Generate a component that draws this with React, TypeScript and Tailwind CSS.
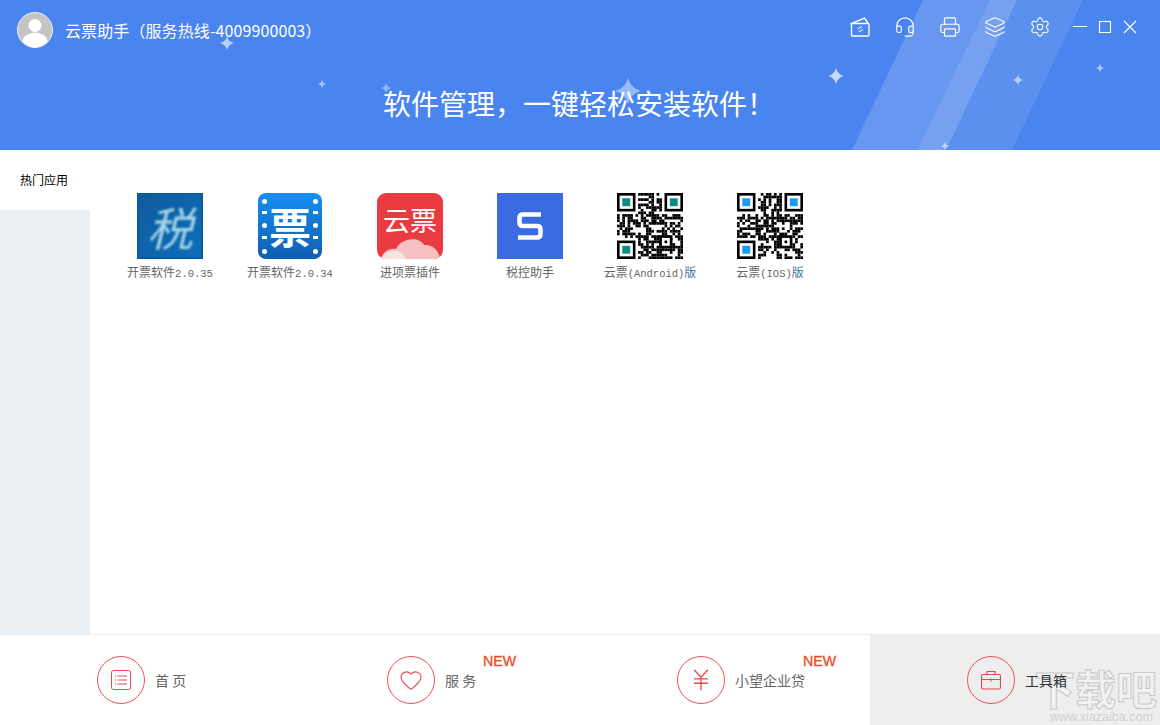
import { Headset, Printer, Layers, Settings, Heart, JapaneseYen } from "lucide-react";

const cjk = "font-['Noto_Sans_CJK_SC','Liberation_Sans',sans-serif]";

const stars: [number, number, number, number][] = [
  [227, 43, 7, 0.75],
  [322, 84, 4, 0.6],
  [386, 88, 5, 0.5],
  [628, 91, 13, 0.55],
  [836, 76, 8, 0.85],
  [1018, 80, 5, 0.7],
  [1100, 68, 4, 0.65],
  [945, 146, 4, 0.7],
];

function HeaderDecor() {
  return (
    <svg className="absolute inset-0" width="1160" height="150" viewBox="0 0 1160 150">
      <polygon points="923,0 1017,0 946,150 852,150" fill="#fff" fillOpacity="0.16" />
      <polygon points="990,0 1083,0 1012,150 917,150" fill="#fff" fillOpacity="0.1" />
      {stars.map(([x, y, r, o]) => (
        <path
          key={`${x}-${y}`}
          d={`M${x} ${y - r}Q${x + r * 0.2} ${y - r * 0.2} ${x + r} ${y}Q${x + r * 0.2} ${y + r * 0.2} ${x} ${y + r}Q${x - r * 0.2} ${y + r * 0.2} ${x - r} ${y}Q${x - r * 0.2} ${y - r * 0.2} ${x} ${y - r}Z`}
          fill="#dbe9ff"
          fillOpacity={o}
        />
      ))}
    </svg>
  );
}

function Avatar() {
  return (
    <svg width="36" height="36" viewBox="0 0 36 36">
      <defs>
        <clipPath id="av">
          <circle cx="18" cy="18" r="17.5" />
        </clipPath>
      </defs>
      <circle cx="18" cy="18" r="17.5" fill="#c4c4c4" />
      <g clipPath="url(#av)">
        <circle cx="18" cy="13.5" r="6.5" fill="#fff" />
        <ellipse cx="18" cy="30" rx="12.5" ry="9.5" fill="#fff" />
      </g>
      <circle cx="18" cy="18" r="17.5" fill="none" stroke="#e8eefb" strokeWidth="1" />
    </svg>
  );
}

function TicketIcon() {
  return (
    <svg width="22" height="22" viewBox="0 0 22 22" fill="none" stroke="#fff" strokeWidth="1.4">
      <path d="M1.5 8 15.5 2l3.5 5" />
      <rect x="2.5" y="7.5" width="17.5" height="12.5" rx="1" />
      <path d="M8.5 13 13 10.5M9.5 16 14 13.5" strokeWidth="1" />
    </svg>
  );
}

function WindowControls() {
  return (
    <svg width="64" height="14" viewBox="0 0 64 14" fill="none" stroke="#fff" strokeWidth="1.1">
      <path d="M0 6.5H14" />
      <rect x="26.5" y="1.5" width="11" height="11" />
      <path d="M51 1 63 13M63 1 51 13" />
    </svg>
  );
}

function ShuiIcon() {
  return (
    <div className="w-[66px] h-[66px] bg-gradient-to-br from-[#0f5c9f] to-[#0d6dba] border-2 border-[#0b5a9c] flex items-center justify-center overflow-hidden">
      <span className={`${cjk} text-[46px] leading-none text-[#a5d6e8] italic blur-[0.8px]`}>税</span>
    </div>
  );
}

function PiaoIcon() {
  const marks = [
    { y: 8, round: true },
    { y: 20, round: false },
    { y: 32, round: true },
    { y: 45, round: false },
    { y: 58, round: true },
  ];
  return (
    <div className="relative w-[64px] h-[66px] rounded-[8px] bg-gradient-to-b from-[#1590f2] to-[#0f5fb0] flex items-center justify-center">
      <span className={`${cjk} text-[42px] leading-none font-bold text-white`}>票</span>
      {marks.map((m) => (
        <span
          key={`l${m.y}`}
          className={`absolute left-[4px] bg-white ${m.round ? "w-[5px] h-[5px] rounded-full" : "w-[5px] h-[3px]"}`}
          style={{ top: m.y - 2 }}
        />
      ))}
      {marks.map((m) => (
        <span
          key={`r${m.y}`}
          className={`absolute right-[4px] bg-white ${m.round ? "w-[5px] h-[5px] rounded-full" : "w-[5px] h-[3px]"}`}
          style={{ top: m.y - 2 }}
        />
      ))}
    </div>
  );
}

function YunIcon() {
  return (
    <div className="relative w-[66px] h-[66px] rounded-[9px] bg-[#ea3b40] overflow-hidden flex justify-center">
      <span className={`${cjk} mt-[10px] text-[27px] leading-[34px] text-white`}>云票</span>
      <svg className="absolute left-0 bottom-0" width="66" height="24" viewBox="0 0 66 24">
        <path d="M4 24C6 16 13 13 19 14 24 3 42 1 47 10 55 9 62 15 63 24Z" fill="#f4c0c2" />
        <path d="M4 24C8 16 18 13 25 18 27 20 28 22 28 24Z" fill="#fbe3e3" />
      </svg>
    </div>
  );
}

function SIcon() {
  return (
    <div className="w-[66px] h-[66px] bg-[#3a6be2] flex items-center justify-center">
      <svg width="26" height="28" viewBox="0 0 26 28" fill="none" stroke="#fff" strokeWidth="4.5">
        <path d="M24 2.5H6Q2.5 2.5 2.5 6V10.5Q2.5 14 6 14H20Q23.5 14 23.5 17.5V22Q23.5 25.5 20 25.5H1" />
      </svg>
    </div>
  );
}

function QrCode({ seed, eye }: { seed: number; eye: string }) {
  const size = 25;
  const cells: [number, number][] = [];
  let s = seed;
  const inFinder = (x: number, y: number) =>
    (x < 8 && y < 8) || (x > 16 && y < 8) || (x < 8 && y > 16);
  for (let y = 0; y < size; y++) {
    for (let x = 0; x < size; x++) {
      s = (s * 1103515245 + 12345) & 0x7fffffff;
      if (!inFinder(x, y) && (s >> 16) % 100 < 60) cells.push([x, y]);
    }
  }
  const finder = (x: number, y: number) => (
    <g key={`${x}-${y}`}>
      <rect x={x + 0.5} y={y + 0.5} width="6" height="6" fill="#fff" stroke="#000" />
      <rect x={x + 2} y={y + 2} width="3" height="3" fill={eye} />
    </g>
  );
  return (
    <svg width="66" height="66" viewBox="0 0 25 25">
      {cells.map(([x, y]) => (
        <rect key={`${x}-${y}`} x={x} y={y} width="1.02" height="1.02" fill="#000" />
      ))}
      {finder(0, 0)}
      {finder(18, 0)}
      {finder(0, 18)}
      <rect x="16.5" y="16.5" width="4" height="4" fill="#fff" stroke="#000" />
      <rect x="18" y="18" width="1" height="1" fill="#000" />
    </svg>
  );
}

// latin part of the labels runs a bit smaller than the chinese
function Lat({ children }: { children: React.ReactNode }) {
  return <span className="text-[10.5px] font-['Liberation_Mono',monospace]">{children}</span>;
}

const apps = [
  { icon: <ShuiIcon />, label: <>开票软件<Lat>2.0.35</Lat></> },
  { icon: <PiaoIcon />, label: <>开票软件<Lat>2.0.34</Lat></> },
  { icon: <YunIcon />, label: <>进项票插件</> },
  { icon: <SIcon />, label: <>税控助手</> },
  {
    icon: <QrCode seed={71} eye="#0f8c80" />,
    label: <>云票<Lat>(Android)</Lat><span className="text-[#3f76a8]">版</span></>,
  },
  {
    icon: <QrCode seed={1937} eye="#1b9cec" />,
    label: <>云票<Lat>(IOS)</Lat><span className="text-[#3f76a8]">版</span></>,
  },
];

function NavCircle({ children }: { children: React.ReactNode }) {
  return (
    <div className="w-[48px] h-[48px] shrink-0 rounded-full border border-[#e8545a] flex items-center justify-center text-[#e4474d]">
      {children}
    </div>
  );
}

function ListIcon() {
  return (
    <svg width="20" height="20" viewBox="0 0 20 20" fill="none" stroke="currentColor" strokeWidth="1">
      <rect x="0.5" y="0.5" width="19" height="19" rx="2" />
      <path d="M6.5 6h9.5M6.5 10h9.5M6.5 14h9.5" />
      <path d="M4 6h1M4 10h1M4 14h1" />
    </svg>
  );
}

function BoxIcon() {
  return (
    <svg width="20" height="20" viewBox="0 0 20 20" fill="none" stroke="currentColor" strokeWidth="1.1">
      <rect x="0.5" y="4.5" width="19" height="14.5" rx="1.5" />
      <path d="M6 4.5V1.5h8v3M0.5 9.5h19M10 8.5v3" />
    </svg>
  );
}

const navItems = [
  { icon: <ListIcon />, label: "首 页" },
  { icon: <Heart size={24} strokeWidth={1.1} />, label: "服 务", badge: "left-[193px]" },
  { icon: <JapaneseYen size={26} strokeWidth={1.2} />, label: "小望企业贷", badge: "left-[223px]" },
  { icon: <BoxIcon />, label: "工具箱", active: true },
];

export default function App() {
  return (
    <div className={`${cjk} relative w-[1160px] h-[725px] overflow-hidden bg-white flex flex-col`}>
      <header className="relative h-[150px] shrink-0 bg-[#4a84ee] text-white">
        <HeaderDecor />
        <div className="relative flex items-center h-[60px] pl-[17px]">
          <Avatar />
          <span className="ml-[12px] -mt-[1px] text-[16px] tracking-[0.1px] leading-none">云票助手（服务热线-4009900003）</span>
          <div className="ml-auto flex items-center gap-[23px] mr-[109px] -mt-[6px]">
            <TicketIcon />
            <Headset size={22} strokeWidth={1.2} />
            <Printer size={22} strokeWidth={1.3} />
            <Layers size={22} strokeWidth={1.2} />
            <Settings size={22} strokeWidth={1.2} />
          </div>
          <div className="absolute left-[1073px] top-[20px]">
            <WindowControls />
          </div>
        </div>
        <h1 className="relative text-center text-[28px] leading-[40px] font-normal mt-[23px] pr-[2px]">
          软件管理，一键轻松安装软件！
        </h1>
      </header>

      <main className="flex flex-1 min-h-0">
        <aside className="w-[90px] shrink-0 bg-[#eaf0f3]">
          <div className="h-[60px] bg-white flex items-center justify-center pr-[2px] text-[12px] text-black">热门应用</div>
        </aside>
        <div className="flex-1 pl-[20px] pt-[43px]">
          <div className="flex">
            {apps.map((app, i) => (
              <div key={i} className="w-[120px] flex flex-col items-center">
                <div className="h-[66px] flex items-center justify-center">{app.icon}</div>
                <div className="mt-[5px] text-[12px] leading-[16px] text-[#666] whitespace-nowrap">{app.label}</div>
              </div>
            ))}
          </div>
        </div>
      </main>

      <footer className="h-[91px] shrink-0 border-t border-[#e8eef2] grid grid-cols-4">
        {navItems.map((item) => (
          <div
            key={item.label}
            className={`relative flex items-center gap-[10px] pl-[97px] ${item.active ? "bg-[#eeeeee]" : "bg-white"}`}
          >
            <NavCircle>{item.icon}</NavCircle>
            {item.badge && (
              <span className={`absolute top-[17px] ${item.badge} text-[14.2px] leading-[18px] font-['Liberation_Sans',sans-serif] text-[#f04a23] [-webkit-text-stroke:0.3px_#f04a23]`}>
                NEW
              </span>
            )}
          </div>
        ))}
      </footer>

      <div className="absolute left-[1034px] top-[664px] w-[126px] overflow-hidden pointer-events-none">
        <div className="text-[41px] leading-[47px] font-bold whitespace-nowrap text-[#f2f2f2] [-webkit-text-stroke:1px_#c8c8c8]">下载吧</div>
        <div className="text-[12.5px] leading-[13px] whitespace-nowrap text-[#d0d0d0] font-['Liberation_Sans',sans-serif] ml-[16px]">www.xiazaiba.com</div>
      </div>

      {/* footer labels sit on top of the watermark */}
      <div className="absolute left-0 bottom-0 w-[1160px] h-[90px] grid grid-cols-4 pointer-events-none">
        {navItems.map((item) => (
          <div key={item.label} className="flex items-center pl-[155px]">
            <span className={`text-[14px] ${item.active ? "text-[#333]" : "text-[#666]"} whitespace-nowrap`}>{item.label}</span>
          </div>
        ))}
      </div>
    </div>
  );
}
